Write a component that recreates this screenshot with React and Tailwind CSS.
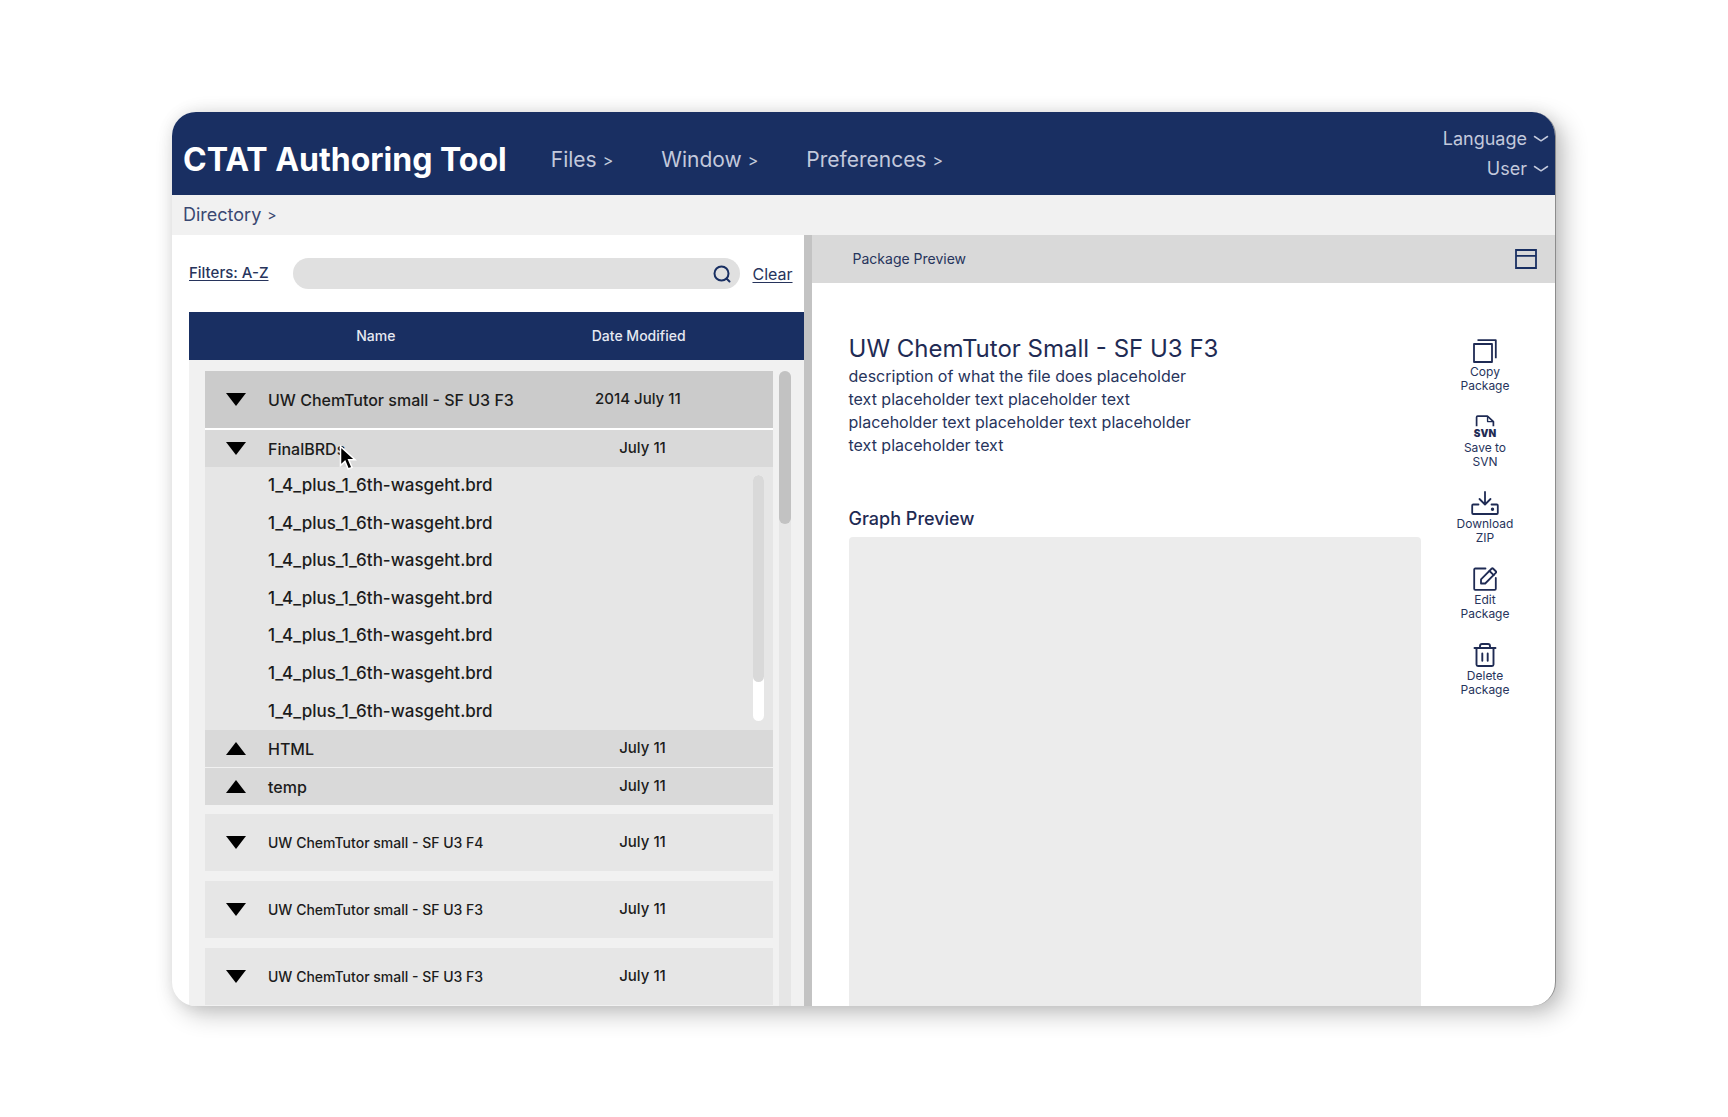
import React, { useState } from 'react';

const menus = ['Files', 'Window', 'Preferences'];

const files = Array.from({ length: 7 }, () => '1_4_plus_1_6th-wasgeht.brd');

const otherPackages = [
    { id: 2, name: 'UW ChemTutor small - SF U3 F4', date: 'July 11' },
    { id: 3, name: 'UW ChemTutor small - SF U3 F3', date: 'July 11' },
    { id: 4, name: 'UW ChemTutor small - SF U3 F3', date: 'July 11' },
];

const ChevronDown = () => (
    <svg width="16" height="8" viewBox="0 0 16 8" fill="none" stroke="currentColor" strokeWidth="1.5" strokeLinecap="round" strokeLinejoin="round">
        <path d="M1.5 1.5 8 5.8l6.5-4.3" />
    </svg>
);

const SearchIcon = () => (
    <svg width="18" height="18" viewBox="0 0 18 18" fill="none" stroke="currentColor" strokeWidth="2" strokeLinecap="round">
        <circle cx="8.5" cy="8.5" r="7" />
        <path d="m13.5 13.5 3 3" />
    </svg>
);

const WindowIcon = () => (
    <svg width="22" height="20" viewBox="0 0 22 20" fill="none" stroke="currentColor" strokeWidth="1.8">
        <path d="M1 1h20v18H1zM1 6.8h20" />
    </svg>
);

const CopyIcon = () => (
    <svg width="24" height="24" viewBox="0 0 24 24" fill="none" stroke="currentColor" strokeWidth="1.8" strokeLinejoin="round">
        <path d="M1 5h18v18H1z" />
        <path d="M4.5 1.2h18.3v18" />
    </svg>
);

const SvnIcon = () => (
    <span className="flex h-6 w-6 flex-col items-center">
        <svg width="22" height="14" viewBox="0 0 22 14" fill="none" stroke="currentColor" strokeWidth="2" strokeLinejoin="round">
            <path d="M1.2 13V2.5Q1.2 1.2 2.5 1.2h11.3L20.8 7.6V13" />
            <path d="M14 1.5v6.2h6.5" strokeWidth="1.6" />
        </svg>
        <span className="text-[10px] leading-3 font-black">SVN</span>
    </span>
);

const DownloadIcon = () => (
    <svg width="28" height="24" viewBox="0 0 28 24" fill="none" stroke="currentColor" strokeWidth="1.8" strokeLinecap="round" strokeLinejoin="round">
        <path d="M14 1v12M8.5 8l5.5 5.5L19.5 8" />
        <path d="M7.5 13.5H2.200a1 1 0 0 0-1 1v7.500a1 1 0 0 0 1 1h23.600a1 1 0 0 0 1-1v-7.500a1 1 0 0 0-1-1H20.500" />
        <circle cx="21.5" cy="18.3" r="0.8" fill="currentColor" />
    </svg>
);

const EditIcon = () => (
    <svg width="24" height="24" viewBox="0 0 24 24" fill="none" stroke="currentColor" strokeWidth="1.8" strokeLinecap="round" strokeLinejoin="round">
        <path d="M12.5 1.5H2.200a1 1 0 0 0-1 1v19.300a1 1 0 0 0 1 1h19.600a1 1 0 0 0 1-1V11" />
        <path d="M8 16.5v-4.200L18.800 1.500q.6-.6 1.200 0l3 3q.6.600 0 1.200L12.200 16.500z" />
        <path d="m16.5 4 4.200 4.200" />
    </svg>
);

const TrashIcon = () => (
    <svg width="24" height="24" viewBox="0 0 24 24" fill="none" stroke="currentColor" strokeWidth="1.9" strokeLinecap="round" strokeLinejoin="round">
        <path d="M1.5 5h21M3.500 5v16.500a1.500 1.500 0 0 0 1.500 1.500h14a1.500 1.500 0 0 0 1.500-1.500V5" />
        <path d="M7 4.8V3q0-2 2-2h6q2 0 2 2v1.800M9.300 10.500v7.200M14.700 10.500v7.200" />
    </svg>
);

const MousePointer = () => (
    <svg className="absolute -right-3 top-2 z-10" width="18" height="26" viewBox="0 0 18 26">
        <path d="M1.5 1.5v19l4.500-4.200 3.200 7.700 3.800-1.600-3.300-7.600h6.300z" fill="#000" stroke="#fff" strokeWidth="1.5" />
    </svg>
);

const Toggle = ({ open, name, onClick }) => (
    <button type="button" onClick={onClick} aria-expanded={open} aria-label={`Toggle ${name}`} className="block pl-[21px]">
        <svg width="20" height="13" viewBox="0 0 20 13" className={open ? '' : 'rotate-180'}>
            <path d="M0 0h20L10 13z" />
        </svg>
    </button>
);

const actions = [
    { label: ['Copy', 'Package'], Icon: CopyIcon },
    { label: ['Save to', 'SVN'], Icon: SvnIcon },
    { label: ['Download', 'ZIP'], Icon: DownloadIcon },
    { label: ['Edit', 'Package'], Icon: EditIcon },
    { label: ['Delete', 'Package'], Icon: TrashIcon },
];

const Header = () => (
    <header className="flex h-[83px] shrink-0 items-center bg-[#192f62] pl-[11px] pr-1.5">
        <h1 className="pt-3 text-[32px] leading-10 font-bold text-white">CTAT Authoring Tool</h1>
        <nav className="ml-11 flex gap-12 pt-3 text-[21px] leading-8 text-[#c3c9dc]">
            {menus.map((menu) => (
                <button key={menu} type="button" className="flex items-center gap-1.5">
                    {menu} <span className="text-base">&gt;</span>
                </button>
            ))}
        </nav>
        <div className="ml-auto flex flex-col items-end text-lg leading-[30px] text-[#c3c9dc]">
            <button type="button" className="flex items-center gap-1.5 leading-[30px]">Language <ChevronDown /></button>
            <button type="button" className="flex items-center gap-1.5 leading-[30px]">User <ChevronDown /></button>
        </div>
    </header>
);

const FileTable = () => {
    const [finalOpen, setFinalOpen] = useState(true);
    const [openFolders, setOpenFolders] = useState([]);

    const toggleFolder = (name) => {
        setOpenFolders(openFolders.includes(name) ? openFolders.filter((f) => f !== name) : [...openFolders, name]);
    };

    return (
        <table className="relative flex min-h-0 flex-1 flex-col overflow-hidden bg-[#f1f1f1] text-[#1c1c1c]">
            <thead className="block shrink-0 bg-[#192f62] text-sm text-[#e6e9f2]">
                <tr className="grid h-12 grid-cols-[374fr_152fr_89fr] items-center">
                    <th className="font-medium">Name</th>
                    <th className="font-medium">Date Modified</th>
                </tr>
            </thead>
            <tbody className="mr-[31px] ml-4 mt-[11px] block shrink-0 bg-white text-base font-medium">
                <tr className="mb-0.5 grid h-[57px] grid-cols-[63px_1fr_260px] items-center bg-[#cbcbcb]">
                    <td><Toggle open name="package" /></td>
                    <td className="whitespace-nowrap">UW ChemTutor small - SF U3 F3</td>
                    <td className="pr-3 text-center text-[15px]">2014 July 11</td>
                </tr>
                <tr className="grid h-[37px] grid-cols-[63px_1fr_260px] items-center bg-[#d9d9d9]">
                    <td><Toggle open={finalOpen} name="FinalBRDs" onClick={() => setFinalOpen(!finalOpen)} /></td>
                    <td><span className="relative inline-block">FinalBRDs<MousePointer /></span></td>
                    <td className="text-center text-[15px]">July 11</td>
                </tr>
            </tbody>
            {finalOpen && (
                <tbody className="relative mr-[31px] ml-4 flex h-[263px] shrink-0 flex-col bg-[#e6e6e6] text-[17px] font-medium before:absolute before:top-2 before:right-[9px] before:bottom-[9px] before:w-[11px] before:rounded-full before:bg-white after:absolute after:top-2 after:right-[9px] after:h-[207px] after:w-[11px] after:rounded-full after:bg-[#d9d9d9]">
                    {files.map((file, i) => (
                        <tr key={i} className="flex flex-1 items-center pl-[63px]">
                            <td>{file}</td>
                        </tr>
                    ))}
                </tbody>
            )}
            <tbody className="mr-[31px] ml-4 flex shrink-0 flex-col gap-px bg-[#f1f1f1] text-base font-medium">
                {['HTML', 'temp'].map((folder) => (
                    <tr key={folder} className="grid h-[37px] grid-cols-[63px_1fr_260px] items-center bg-[#d9d9d9]">
                        <td><Toggle open={openFolders.includes(folder)} name={folder} onClick={() => toggleFolder(folder)} /></td>
                        <td>{folder}</td>
                        <td className="text-center text-[15px]">July 11</td>
                    </tr>
                ))}
            </tbody>
            <tbody className="mr-[31px] ml-4 mt-[9px] flex shrink-0 flex-col gap-[10px] font-medium">
                {otherPackages.map((pkg) => (
                    <tr key={pkg.id} className="grid h-[57px] grid-cols-[63px_1fr_260px] items-center bg-[#e6e6e6]">
                        <td><Toggle open name={pkg.name} /></td>
                        <td className="text-sm">{pkg.name}</td>
                        <td className="text-center text-[15px]">{pkg.date}</td>
                    </tr>
                ))}
            </tbody>
            {/* scroll track and thumb of the whole list */}
            <tfoot aria-hidden="true" className="absolute top-[59px] right-[13px] bottom-0 block w-3 rounded-t-full bg-[#e6e6e6] before:block before:h-[153px] before:rounded-full before:bg-[#c2c2c2]" />
        </table>
    );
};

const DirectoryPanel = () => (
    <section className="flex min-h-0 min-w-0 flex-col pl-[17px]">
        <div className="flex h-[77px] shrink-0 items-center pr-[11px] text-base text-[#27345c]">
            <button type="button" className="shrink-0 text-[15px] font-medium underline underline-offset-2">Filters: A-Z</button>
            <div className="relative ml-6 mr-3 flex-1">
                <input type="text" aria-label="Search" className="block h-[31px] w-full rounded-full bg-[#e0e0e0] px-4 pr-10 focus:outline-none" />
                <button type="button" aria-label="Run search" className="absolute top-[7px] right-[9px] text-[#192f62]">
                    <SearchIcon />
                </button>
            </div>
            <button type="button" className="underline underline-offset-2">Clear</button>
        </div>
        <FileTable />
    </section>
);

const PreviewPanel = () => (
    <section className="flex min-h-0 min-w-0 flex-col text-[#27345c]">
        <div className="flex h-12 shrink-0 items-center justify-between bg-[#d9d9d9] pl-[41px] pr-[18px] text-sm">
            <h2>Package Preview</h2>
            <button type="button" aria-label="Toggle window" className="text-[#192f62]"><WindowIcon /></button>
        </div>
        <div className="flex min-h-0 flex-1 pl-[37px]">
            <div className="flex min-w-0 flex-1 flex-col pt-[50px]">
                <h3 className="text-2xl leading-8 text-[#1f2b54]">UW ChemTutor Small - SF U3 F3</h3>
                <p className="text-base leading-[23px]">
                    description of what the file does placeholder<br />
                    text placeholder text placeholder text<br />
                    placeholder text placeholder text placeholder<br />
                    text placeholder text
                </p>
                <h4 className="mt-[50px] mb-1.5 text-lg leading-6 font-medium text-[#1f2b54]">Graph Preview</h4>
                <div className="flex-1 rounded-t bg-[#ececec]" />
            </div>
            <div className="mr-1.5 flex w-32 shrink-0 flex-col items-center gap-[22px] pt-14 text-xs leading-[14px]">
                {actions.map(({ label, Icon }) => (
                    <button key={label.join(' ')} type="button" className="flex flex-col items-center gap-0.5">
                        <span className="text-[#1f2b54]"><Icon /></span>
                        <span>{label[0]}<br />{label[1]}</span>
                    </button>
                ))}
            </div>
        </div>
    </section>
);

const App = () => {
    return (
        <div className="flex h-screen bg-white px-43 pt-28 pb-[111px] font-['Inter','Open_Sans',sans-serif]">
            <main className="flex flex-1 flex-col overflow-hidden rounded-3xl border-r border-[#8c8c8c] bg-white shadow-[8px_8px_24px_rgba(0,0,0,0.24),0_0_16px_rgba(0,0,0,0.08)]">
                <Header />
                <div className="flex h-10 shrink-0 items-center bg-[#f1f1f1] pl-[11px] text-lg text-[#3a4872]">
                    <button type="button" className="flex items-center gap-1.5">Directory <span className="text-sm">&gt;</span></button>
                </div>
                <div className="grid min-h-0 flex-1 grid-cols-[632fr_8px_744fr]">
                    <DirectoryPanel />
                    <div className="bg-[#c3c3c3]" />
                    <PreviewPanel />
                </div>
            </main>
        </div>
    );
};

export default App;
